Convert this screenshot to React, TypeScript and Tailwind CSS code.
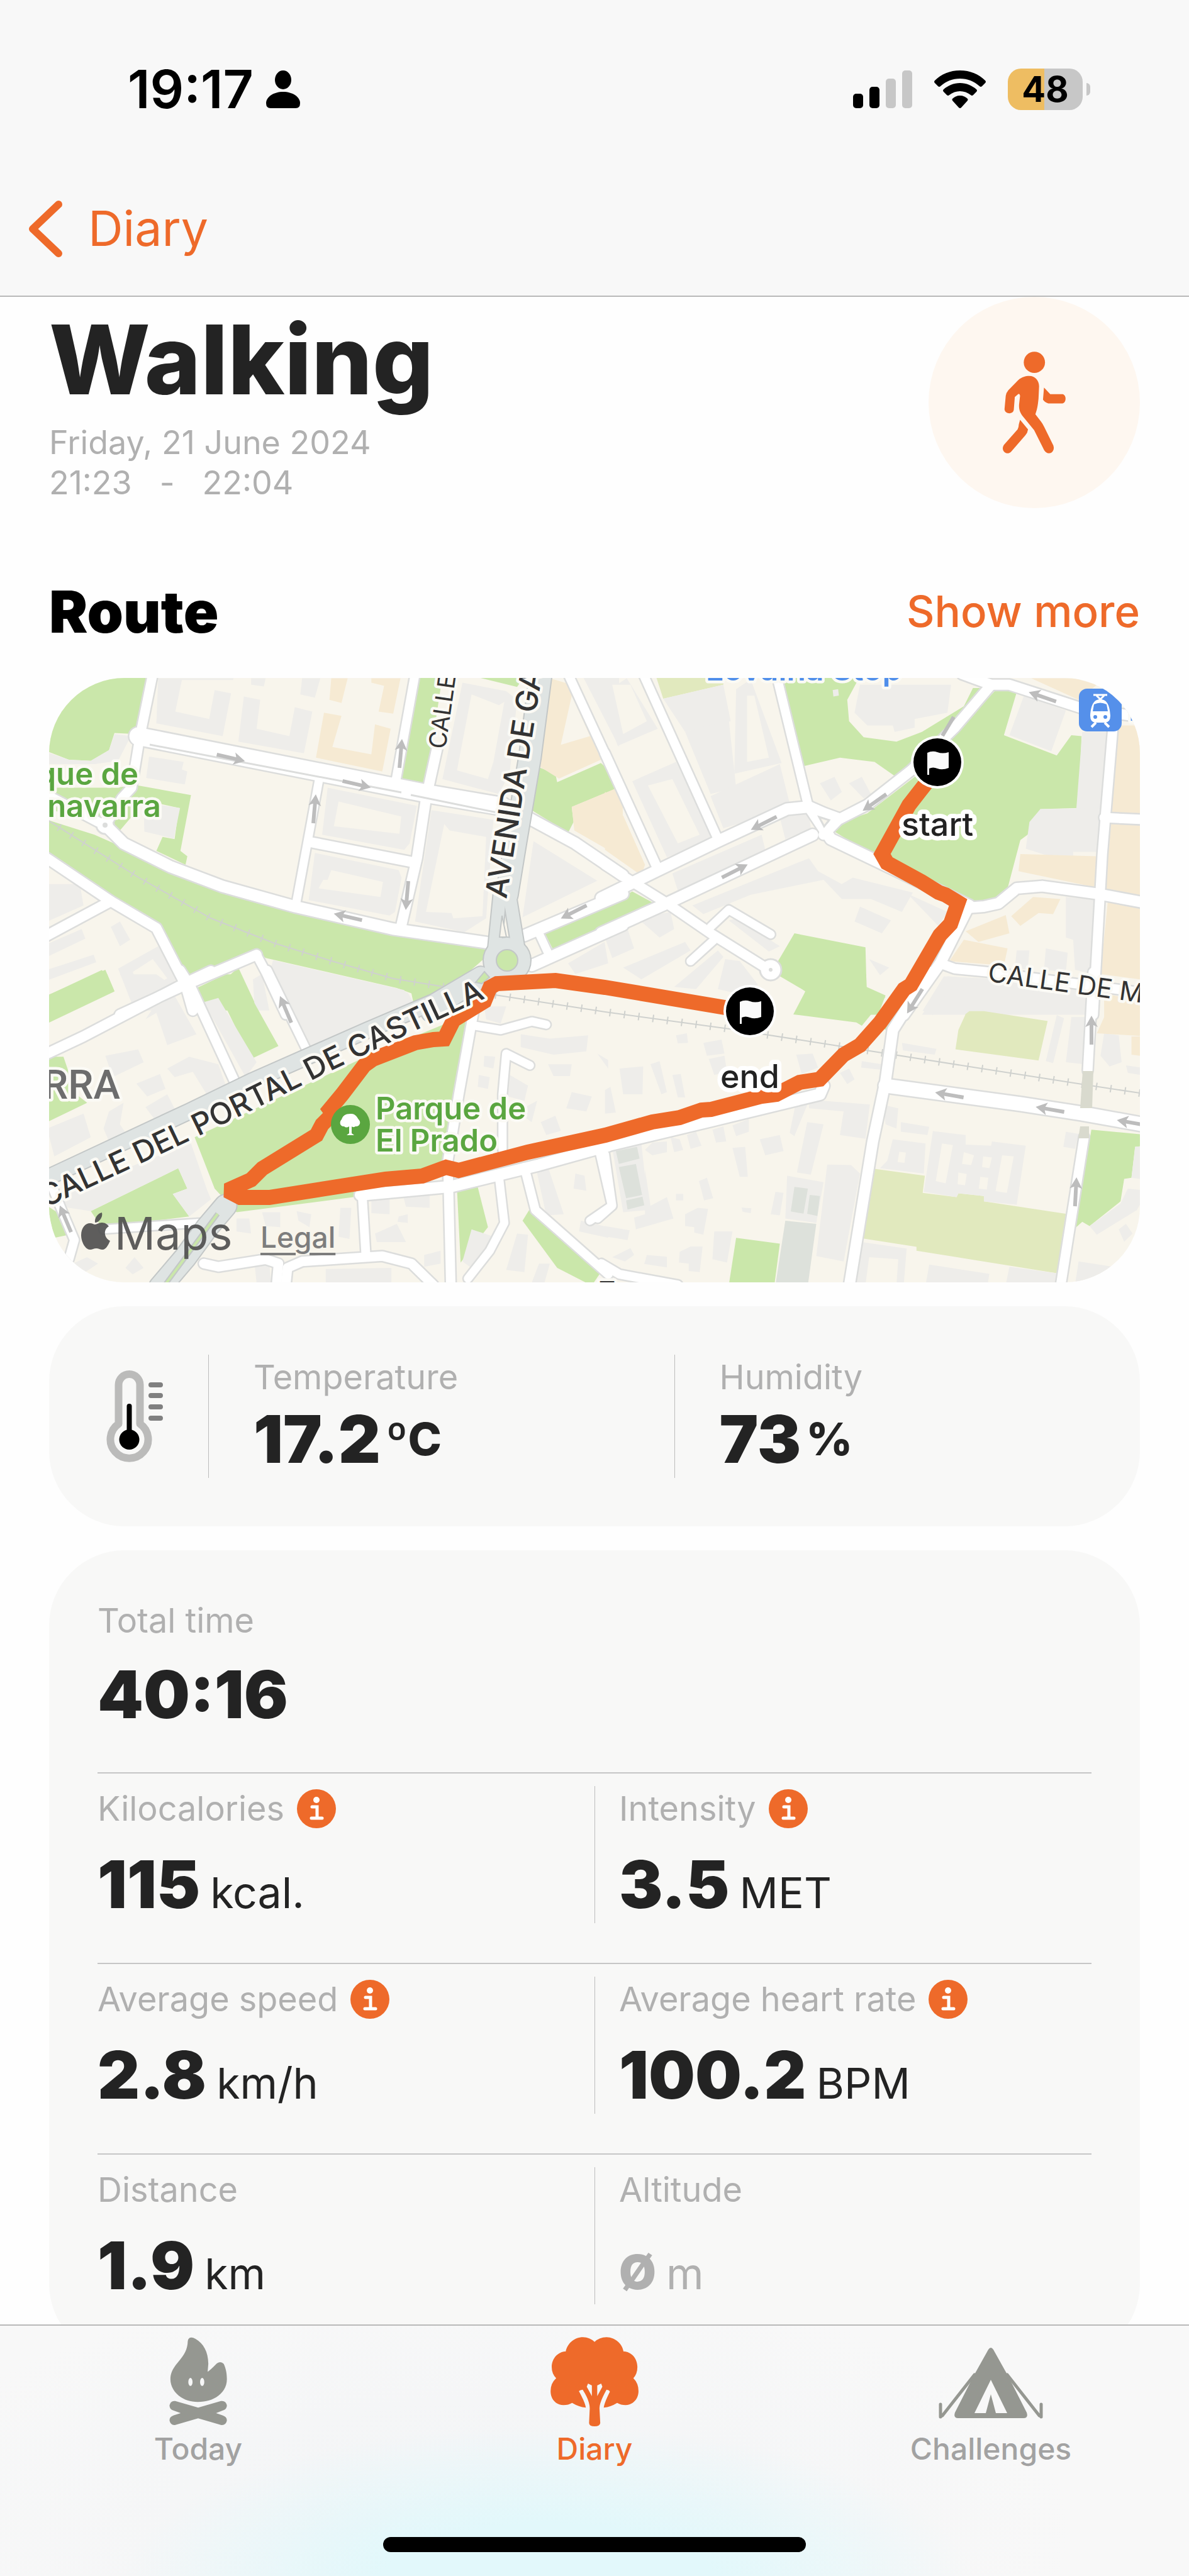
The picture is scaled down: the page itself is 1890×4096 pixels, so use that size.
import type { ReactNode } from "react";

type Road = [points: string, width: number];

type Tile = {
  matrix: string;
  parks: string[];
  fields: string[];
  buildings: string[];
  shops: string[];
  courts: string[];
  sheds: string[];
  roads: Road[];
  majors: Road[];
};

const tiles: Tile[] = [
  {
    matrix: "matrix(0.5792 0 0 0.3407 -3.2 -9.6)",
    parks: [
      "-5,20 280,20 245,290 185,285 170,365 120,415 60,410 0,370",
      "180,540 250,530 395,575 366,835 385,860 380,900 300,835 317,770 350,780 362,635 270,600 200,740 150,700 0,640 0,540",
      "0,690 130,760 210,820 330,920 480,1010 680,1110 950,1215 1210,1285 1205,1330 1090,1500 1010,1580 1000,1500 960,1475 600,1335 570,1300 390,1425 310,1190 180,1070 0,870",
      "1020,20 1085,20 1040,530 965,510",
      "1170,20 1310,20 1290,70",
      "1350,445 1395,475 1400,515 1520,425 1580,520 1568,540 1440,630 1445,700 1430,750 1330,645",
      "1365,1215 1580,1055 1580,1180 1390,1300",
      "0,1510 160,1390 185,1490 60,1580 0,1580",
      "425,1530 525,1380 580,1580 430,1580",
    ],
    fields: [],
    buildings: [
      "305,30 512,30 510,38 370,38 352,185 445,220 460,85 505,100 482,300 300,240",
      "540,115 585,130 575,265 665,300 680,165 728,185 705,380 525,325",
      "560,30 600,30 595,68 560,60",
      "700,30 750,30 735,120 695,105",
      "280,395 375,420 370,455 385,465 378,525 272,495",
      "185,290 230,300 195,415 130,430 0,430 0,375 60,410 120,415 170,365",
      "265,610 365,635 348,778 267,745",
      "770,540 1015,625 995,800 980,830 755,760",
      "735,845 965,925 973,960 955,1120 940,1137 718,1065",
      "1140,50 1260,90 1290,130 1270,470 1240,570 1085,500",
      "1055,645 1225,690 1205,1150 1145,1215 1010,1165",
      "1335,790 1510,975 1305,1145",
      "1470,20 1570,20 1570,350",
      "620,1345 980,1485 1010,1580 640,1580 605,1440",
      "565,1435 590,1410 610,1580 570,1580",
      "0,990 90,990 100,1090 0,1165",
      "175,1190 200,1165 228,1250 200,1280",
      "0,1270 95,1200 105,1245 0,1330",
      "0,1390 128,1320 135,1355 0,1440",
      "195,1385 305,1280 355,1430 300,1580 240,1580",
      "1430,1360 1530,1260 1540,1360 1450,1410",
    ],
    shops: [
      "780,30 825,30 808,145 775,130",
      "890,30 970,30 950,195 910,185 925,65 890,50",
      "760,190 808,205 783,350 890,385 900,245 943,265 920,465 738,400",
      "1380,30 1440,60 1520,410 1405,498 1350,440",
      "1580,530 1440,630 1447,740 1580,870",
    ],
    courts: [
      "800,605 972,675 967,755 787,720",
      "780,925 922,980 915,1050 745,1010 758,970 770,970",
      "1165,105 1240,155 1255,140 1225,420 1210,500 1125,460",
      "1090,710 1105,740 1205,770 1195,1140 1115,1150 1110,1125 1040,1120",
      "235,1400 290,1340 330,1430 260,1500",
      "1440,110 1490,300 1410,340",
    ],
    sheds: [],
    roads: [
      ["290,10 255,300 232,540 205,590 160,715", 15],
      ["160,715 210,800 340,910 480,1000 680,1095 950,1200 1225,1268", 18],
      ["0,575 140,700", 15],
      ["0,870 175,1070 300,1195 380,1460 400,1580", 16],
      ["0,1230 175,1070", 16],
      ["250,300 1050,570 1250,628", 28],
      ["1320,680 1450,800 1580,950", 18],
      ["1010,10 955,530", 14],
      ["1070,360 1040,590 1015,870 970,1200", 16],
      ["750,470 700,930 683,1085", 13],
      ["725,795 1010,890", 16],
      ["1430,10 1580,560", 14],
      ["1580,1035 1310,1230", 18],
      ["1580,1180 1330,1370", 18],
      ["1350,1220 1380,1330", 13],
      ["200,1600 380,1460 575,1320", 16],
      ["575,1320 600,1400 655,1600", 14],
    ],
    majors: [
      ["1355,10 1325,400 1285,800 1262,1040", 34],
      ["1245,1000 1228,1290", 20],
      ["1265,1000 1292,1280", 20],
      ["1225,1400 1130,1500 1050,1590", 26],
    ],
  },
  {
    matrix: "matrix(0.5792 0 0 0.3407 883.6 -9.6)",
    parks: [
      "485,20 700,20 665,130 670,230 710,305 800,325 870,280 985,160 1010,75 1055,75 840,450 795,485 740,420 690,410 645,400 545,440",
      "1075,80 1130,95 1095,295 1240,390 1280,295 1308,300 1300,635 1195,640 1160,760 1140,785 1105,1010 1085,1060 1040,1080 990,1070 740,860 630,745 650,700 720,660 850,490",
      "0,1095 75,1025 130,1075 0,1185",
      "520,1220 715,1285 718,1470 770,1510 750,1600 530,1600 550,1490 480,1420 475,1350",
      "0,480 15,540 0,560",
    ],
    fields: ["140,20 325,20 325,60 160,125"],
    buildings: [
      "160,125 325,60 345,230 220,280",
      "0,95 60,30 145,265 35,345 0,180",
      "360,80 400,35 485,425 355,475",
      "220,280 340,225 360,540 290,570",
      "290,580 480,430 510,635 325,730",
      "75,510 195,420 300,780 170,865",
      "700,60 950,60 940,190 850,220 850,260 795,280 790,250 720,250 685,190",
      "625,85 640,80 642,110 627,115",
      "1150,110 1265,180 1225,370 1110,295",
      "1310,280 1380,280 1360,720 1290,720",
      "1195,640 1360,635 1350,840 1285,840 1285,895 1155,825 1165,700",
      "185,940 430,760 440,830 200,1020",
      "480,680 560,660 565,730 495,780",
      "240,1090 530,890 560,870 585,930 650,990 680,960 845,1030 815,1120 730,1060 650,1060 600,970 400,1040 270,1130",
      "700,1095 785,1160 760,1220 685,1165",
      "590,520 630,490 650,560 620,600",
      "670,520 705,490 730,570 710,590",
      "340,1160 360,1150 480,1280 450,1305",
      "0,1240 60,1190 80,1290 20,1335",
      "90,1150 180,1120 190,1200 150,1240",
      "50,1380 220,1260 235,1300 100,1435",
      "190,1470 310,1300 325,1330 250,1480",
      "330,1340 370,1350 420,1460 360,1500 310,1480",
      "830,1035 940,1120 915,1185",
      "725,1340 780,1380 755,1415",
      "1265,1050 1350,1065 1340,1410 1290,1390 1285,1250 1265,1240",
      "1130,1300 1165,1300 1160,1390 1125,1380",
      "1210,1290 1270,1310 1265,1400 1205,1390",
      "940,1420 1330,1480 1320,1600 870,1600",
    ],
    shops: [
      "1410,250 1490,250 1490,660 1390,655",
      "1390,700 1490,710 1490,1050 1370,1010",
      "1140,850 1350,860 1345,1005 1135,930",
      "1170,30 1290,30 1350,60 1300,130",
      "1175,1050 1250,1060 1230,1130 1190,1125 1140,1185 1115,1140",
      "1100,1135 1110,1220 1025,1260 990,1210",
      "985,1250 1105,1290 1095,1370 945,1350",
      "1380,1070 1490,1110 1490,1440 1360,1410",
      "0,560 45,600 0,700",
      "0,720 50,670 110,900 100,950 0,830",
    ],
    courts: ["118,530 185,500 260,760 200,800", "20,60 70,60 115,230 50,290", "390,110 410,110 450,400 390,420"],
    sheds: [],
    roads: [
      ["105,10 310,780", 14],
      ["0,380 145,920", 15],
      ["470,10 560,640", 14],
      ["1060,60 960,260 840,460 720,620 640,690 600,760", 16],
      ["980,10 1060,60 1110,60 1310,170 1490,215", 16],
      ["-10,1055 140,930 310,790 500,640 560,630 600,660 640,685", 18],
      ["-10,1218 170,1080 570,760", 18],
      ["565,640 620,780 1000,1090", 18],
      ["1000,1100 1040,1095 1080,1080 1130,1010 1200,1000 1350,1035 1490,1080", 17],
      ["0,900 170,1080 290,1220 450,1390", 15],
      ["290,1190 340,1110 455,1225", 13],
      ["300,1250 235,1350", 13],
      ["1000,1090 920,1360 820,1600", 17],
      ["920,1360 960,1385 1050,1400 1490,1500", 15],
      ["1395,240 1365,850 1340,1600", 15],
      ["1370,680 1490,690", 15],
    ],
    majors: [],
  },
  {
    matrix: "matrix(0.5792 0 0 0.3407 -3.2 471.2)",
    parks: [
      "0,100 150,-20 165,0 185,80 0,230",
      "410,65 490,0 525,0 635,335 560,395 475,100 430,140",
      "405,760 880,380 1180,170 1110,640 1095,870 1030,930 860,1010 840,1040 520,1110 460,1000",
      "0,385 45,385 80,560 110,600 0,690",
      "120,1105 360,905 385,1000 345,1025 390,1130 150,1180",
      "0,1080 45,1130 75,1210 20,1230",
      "1125,1000 1180,980 1210,1180 1135,1345",
      "1325,1095 1520,1390 1500,1440 1480,1440 1400,1370 1305,1150",
    ],
    fields: [],
    buildings: [
      "635,0 770,0 990,85 1010,145 825,290 720,370",
      "200,0 300,0 350,60 250,130",
      "270,210 300,180 330,330 410,280 350,100 290,160",
      "430,130 470,110 575,410 545,480",
      "330,440 390,385 470,420 495,540 440,565 400,455 350,480",
      "160,380 250,350 265,410 180,480",
      "245,510 310,465 325,535 275,570",
      "270,620 330,560 360,660 310,710",
      "0,720 100,650 120,760 20,850",
      "170,640 210,600 200,700 235,790 180,820 155,720",
      "0,1060 270,870 395,790 440,1010 450,1050 390,1130 345,1025 385,1000 360,905 120,1105 60,1090",
      "1300,280 1380,300 1485,285 1480,360 1390,375 1300,340",
      "1200,150 1260,150 1245,230 1205,210",
      "1375,420 1440,420 1435,475 1390,475",
      "1510,370 1540,400 1540,440",
      "1200,380 1230,385 1225,440 1198,430",
      "1185,470 1215,480 1210,535 1182,525",
      "1270,470 1320,520 1310,590 1265,570",
      "1440,550 1495,570 1480,640 1425,625",
      "1355,690 1395,660 1410,730 1370,750",
      "1290,640 1345,590 1330,690",
      "975,1020 1050,1025 1050,1090 985,1085",
      "890,1060 940,1045 940,1120 890,1115",
      "965,1130 990,1120 990,1160 962,1155",
      "900,1210 960,1165 985,1250 905,1250",
      "805,1090 835,1090 830,1235 800,1225",
      "590,1110 640,1110 640,1180 600,1175",
      "520,1140 555,1140 560,1210 520,1200",
      "685,1105 725,1120 720,1180 690,1150",
      "765,1375 945,1370 945,1440 765,1440",
      "1340,890 1375,900 1418,1120 1370,1125",
      "1165,1190 1235,1230 1180,1390 1140,1340",
      "1465,1150 1540,1180 1540,1230 1460,1200",
      "1290,1210 1320,1215 1310,1390 1260,1380",
      "1350,1350 1380,1350 1365,1440 1330,1440",
      "1450,930 1475,940 1480,1010 1445,1000",
      "570,1360 610,1350 615,1440 575,1440",
      "1035,1310 1080,1290 1080,1350 1035,1365",
      "70,1350 110,1320 140,1350 100,1395",
      "215,1370 240,1320 265,1370 235,1400",
    ],
    shops: [],
    courts: [],
    sheds: [],
    roads: [
      ["0,370 100,290 375,45 450,-15", 16],
      ["365,-20 395,60 520,520", 15],
      ["605,-20 720,380", 13],
      ["1170,180 1130,560 1100,870 1108,1450", 15],
      ["1175,240 1245,260 1330,220 1370,235", 13],
      ["1250,820 1250,560 1260,370 1325,425", 13],
      ["860,1030 1110,990 1350,890 1540,800", 18],
      ["865,1030 875,1310", 14],
      ["430,1350 470,1365 600,1330 635,1350 630,1450", 15],
      ["655,1450 660,1370 700,1340 920,1315 1000,1350 1060,1450", 15],
      ["1310,900 1340,1100 1540,1400", 14],
      ["1240,940 1255,1160 1215,1290 1155,1420", 13],
      ["1515,820 1550,1080 1490,1150", 13],
      ["0,930 40,1100 75,1240 60,1330", 14],
      ["155,1190 420,1160", 13],
    ],
    majors: [
      ["1190,0 1060,130 880,260 560,500 390,640 0,950", 24],
      ["490,1080 440,1180 380,1320 310,1460", 34],
    ],
  },
  {
    matrix: "matrix(0.5792 0 0 0.3407 883.6 471.2)",
    parks: [
      "1335,725 1490,750 1490,800 1455,805 1445,950 1425,955 1415,1060 1330,1175 1310,1155 1290,1185",
      "360,1230 480,1257 465,1450 340,1450",
      "485,0 717,0 718,65 770,105 705,240 690,225 517,187 550,80",
      "850,60 775,262 745,240",
    ],
    fields: [
      "1000,172 1040,172 1215,218 1190,402 962,350 970,260 990,185",
      "737,907 878,940 872,1020 965,1040 970,1022 1040,1035 1040,1060 1265,1118 1240,1395 855,1290 855,1272 705,1232",
    ],
    buildings: [
      "930,10 1060,20 1310,60 1300,180 1205,180 1060,170 1000,160 995,75 945,70 900,190 872,170",
      "1240,190 1260,205 1230,415 1210,405",
      "1280,200 1325,200 1315,420 1265,410",
      "1370,275 1410,285 1418,410 1385,430 1360,380",
      "815,320 910,348 905,375 818,355",
      "560,585 727,608 715,768 645,750 655,640 560,625",
      "525,590 560,590 520,755 507,740",
      "555,690 600,700 565,935 527,925",
      "610,888 675,890 700,930 655,1340 580,1315",
      "500,940 600,970 580,1160 495,1140",
      "765,610 805,625 800,720 770,700",
      "812,690 890,712 885,750 812,735",
      "790,770 880,790 875,930 755,905 775,870",
      "900,732 990,750 990,795 1060,800 1062,780 1155,800 1130,1075 1040,1060 1040,1035 970,1022 965,1040 875,1015",
      "350,705 395,675 395,735 360,755",
      "425,770 480,750 490,825 440,845",
      "295,725 325,710 333,780 305,785",
      "225,750 250,735 265,800 235,815",
      "180,760 205,770 215,820 190,830",
      "110,820 130,785 170,780 170,830 130,845",
      "350,810 385,805 392,945 370,945",
      "258,965 280,950 297,1045 272,1055",
      "20,810 100,790 120,1100 50,1110",
      "110,910 125,1080 170,1040 188,1140 85,1190 80,1135 110,1120",
      "220,1120 255,1090 283,1095 270,1215 245,1205 245,1180 220,1175",
      "300,1200 350,1200 335,1345 295,1330",
      "205,1295 235,1270 268,1270 260,1390 230,1385 230,1350 203,1345",
      "20,1320 70,1278 80,1310 55,1340",
      "115,1310 170,1318 170,1368 108,1352",
      "0,1175 68,1195 62,1240 5,1225",
      "468,1015 490,1020 480,1125 455,1120",
      "195,1025 215,1025 215,1055 195,1055",
      "375,1088 402,1092 400,1115 378,1108",
      "195,285 225,275 228,320 200,322",
      "270,320 320,305 328,370 280,380",
      "285,395 328,380 335,455 300,470",
      "525,375 570,370 585,435 540,465",
      "645,460 670,440 685,490 665,512",
      "40,440 105,430 103,560 50,560",
      "125,420 150,405 170,550 155,560",
      "185,470 208,465 220,575 200,575",
      "0,540 15,525 30,645 0,650",
      "705,405 760,420 755,445 703,435",
      "705,1250 828,1280 820,1450 800,1450 805,1330 725,1320 715,1450 690,1450 700,1300",
      "890,1355 1055,1398 1050,1450 880,1450",
      "1110,1365 1240,1395 1240,1450 1100,1450",
      "1300,1340 1395,1365 1380,1450 1290,1450",
      "1435,1000 1490,1010 1460,1100 1350,1215 1330,1175 1415,1070",
      "1410,1190 1430,1165 1448,1210 1425,1248",
      "1455,805 1490,800 1490,960 1445,950",
      "1430,425 1490,440 1490,475 1435,460",
      "1265,735 1300,745 1290,815 1258,805",
    ],
    shops: ["1370,90 1490,130 1490,290 1350,275 1370,200", "1445,290 1490,290 1490,385 1445,375"],
    courts: [
      "925,790 955,797 935,975 908,965",
      "1090,845 1122,850 1103,1020 1072,1012",
      "985,830 1013,845 1005,890 980,885",
      "1038,850 1062,855 1055,905 1035,900",
      "970,925 993,932 988,985 968,980",
      "1030,945 1052,950 1048,1005 1026,1000",
      "808,828 826,832 822,880 803,876",
    ],
    sheds: [
      "30,825 88,805 95,860 38,885",
      "38,900 85,885 102,1030 58,1045",
      "58,1055 103,1038 108,1078 62,1098",
      "520,992 557,1000 545,1117 510,1107",
      "562,1030 590,1035 583,1128 555,1118",
      "495,1150 580,1165 557,1450 468,1450",
    ],
    roads: [
      ["890,-10 790,260 770,500 735,780 670,1460", 17],
      ["770,520 1140,605 1310,650 1490,705", 22],
      ["1340,-10 1325,450", 15],
      ["1315,760 1250,1460", 15],
      ["-15,808 300,680 590,560 600,520", 18],
      ["0,840 20,1080 -20,1140", 13],
      ["-10,1350 40,1400 200,1450", 14],
    ],
    majors: [],
  },
];

// x, y and heading of every one-way arrow
const arrows: [number, number, number][] = [
  [289, 127, 13],
  [489, 169, 13],
  [559, 120, -85],
  [422, 208, -85],
  [569, 346, 95],
  [475, 380, 193],
  [834, 372, 153],
  [376, 527, -113],
  [26, 860, -113],
  [1579, 30, 199],
  [1312, 198, 145],
  [1136, 231, 153],
  [1090, 307, -27],
  [1376, 514, 122],
  [1657, 560, -90],
  [1431, 663, 190],
  [1591, 686, 190],
  [1720, 707, 190],
  [1632, 817, -87],
];

const routePoints =
  "1411,140 1399,161 1367,202 1324,280 1332,294 1387,324 1414,341 1425,345 1445,357 1433,391 1416,409 1370,488 1359,495 1321,548 1289,584 1263,599 1225,638 1193,643 1156,662 1133,665 1052,686 1037,687 1002,699 959,706 884,727 761,754 651,783 631,778 593,792 535,797 350,826 304,826 283,815 321,798 339,780 425,727 434,710 451,693 446,686 466,662 501,616 515,606 582,580 611,575 628,574 643,544 692,514 701,492 712,486 805,481 884,492 1086,526";

const railways = [
  "-4,225 142,317 257,382 356,421 449,450 547,478 628,491",
  "709,504 884,531 1081,558 1254,585 1463,618 1642,646 1740,661",
];

const Polygons = ({ list, fill }: { list: string[]; fill: string }) => (
  <>
    {list.map((points) => (
      <polygon key={points} points={points} fill={fill} />
    ))}
  </>
);

const Roads = ({ list, color, extra = 0 }: { list: Road[]; color: string; extra?: number }) => (
  <>
    {list.map(([points, width]) => (
      <polyline
        key={points}
        points={points}
        fill="none"
        stroke={color}
        strokeWidth={width + extra}
        strokeLinecap="round"
        strokeLinejoin="round"
        vectorEffect="non-scaling-stroke"
      />
    ))}
  </>
);

const Marker = ({ x, y }: { x: number; y: number }) => (
  <g transform={`translate(${x} ${y})`}>
    <circle r="42" fill="#fff" />
    <circle r="38" fill="#000" />
    <path
      d="M-16 -15 Q-8 -19 0 -16 Q8 -13 18 -16 V9 Q8 13 0 10 Q-7 7 -13 10 V20 H-16 Z"
      fill="#fafafa"
    />
  </g>
);

const RouteMap = () => (
  <svg
    viewBox="0 0 1734 961"
    preserveAspectRatio="xMidYMid slice"
    className="block h-full w-full font-['Inter',sans-serif]"
    role="img"
    aria-label="Walking route"
  >
    <rect width="1734" height="961" fill="#f8f5ec" />
    {tiles.map((tile) => (
      <g key={tile.matrix} transform={tile.matrix}>
        <Polygons list={tile.parks} fill="#cae7aa" />
        <Polygons list={tile.fields} fill="#e1e9be" />
        <Polygons list={tile.buildings} fill="#eeedea" />
        <Polygons list={tile.shops} fill="#f6ead3" />
        <Polygons list={tile.courts} fill="#f8f5ec" />
        <Polygons list={tile.sheds} fill="#dde1db" />
      </g>
    ))}

    {railways.map((points) => (
      <g key={points} fill="none" stroke="#cfd1ce">
        <polyline points={points} strokeWidth="2" />
        <polyline points={points} strokeWidth="12" strokeDasharray="2 21" />
      </g>
    ))}

    {tiles.map((tile) => (
      <g key={tile.matrix} transform={tile.matrix}>
        <Roads list={tile.roads} color="#dcdddc" extra={5} />
      </g>
    ))}
    <circle cx="89" cy="234" r="14" fill="#fff" stroke="#dcdddc" strokeWidth="3" />
    <circle cx="1147" cy="464" r="17" fill="#fff" stroke="#dcdddc" strokeWidth="3" />
    {tiles.map((tile) => (
      <g key={tile.matrix} transform={tile.matrix}>
        <Roads list={tile.roads} color="#ffffff" />
      </g>
    ))}
    <path d="M160 106 L560 182 M575 186 L712 214" stroke="#dcdddc" strokeWidth="3" />
    <path d="M1643 625 H1660 L1658 684 H1639 Z M1639 713 H1653 L1653 732 H1636 Z" fill="#d9dace" />
    <path d="M1224 221 L1240 226 L1232 236 Z" fill="#f8f5ec" stroke="#dcdddc" strokeWidth="3" />
    <circle cx="89" cy="234" r="4" fill="#dcdddc" />
    <circle cx="1147" cy="464" r="3" fill="#dcdddc" />

    {tiles.map((tile) => (
      <g key={tile.matrix} transform={tile.matrix}>
        <Roads list={tile.majors} color="#c3c7c7" extra={4} />
      </g>
    ))}
    <ellipse cx="728" cy="449" rx="27" ry="26" fill="none" stroke="#c3c7c7" strokeWidth="24" />
    {tiles.map((tile) => (
      <g key={tile.matrix} transform={tile.matrix}>
        <Roads list={tile.majors} color="#dfe4e3" />
      </g>
    ))}
    <ellipse cx="728" cy="449" rx="27" ry="26" fill="#cae7aa" stroke="#dfe4e3" strokeWidth="20" />
    <circle cx="728" cy="449" r="17" fill="#cae7aa" stroke="#c3c7c7" strokeWidth="2" />
    <path d="M720 378 L716 412 L727 412 Z" fill="#f8f5ec" stroke="#c3c7c7" strokeWidth="2" />
    <path d="M692 467 L700 476 L688 486 L678 484 Z" fill="#cae7aa" stroke="#c3c7c7" strokeWidth="2" />
    <path d="M268 852 L182 968" stroke="#c3c7c7" strokeWidth="8" />
    <path d="M268 852 L182 968" stroke="#cae7aa" strokeWidth="4" />

    {arrows.map(([x, y, angle]) => (
      <path
        key={`${x}-${y}`}
        transform={`translate(${x} ${y}) rotate(${angle})`}
        d="M-23 -3 H8 L5 -10 L23 0 L5 10 L8 3 H-23 Z"
        fill="#bdbdbd"
      />
    ))}
    <path d="M1420 92 L1438 62" stroke="#bdbdbd" strokeWidth="6" />

    <polyline
      points={routePoints}
      fill="none"
      stroke="#ee6a2a"
      strokeWidth="24"
      strokeLinejoin="miter"
      strokeMiterlimit="2"
    />

    <g
      stroke="#fbfaf5"
      strokeWidth="9"
      strokeLinejoin="round"
      paintOrder="stroke"
      fill="#333333"
      fontWeight="500"
    >
      <path id="castilla" d="M-130 900 Q60 812 140 775 Q300 700 431 633 Q560 570 694 509" fill="none" stroke="none" />
      <text fontSize="48">
        <textPath href="#castilla" startOffset="100%" textAnchor="end">
          CALLE DEL PORTAL DE CASTILLA
        </textPath>
      </text>
      <text fontSize="48" transform="translate(727 352) rotate(-81)">
        AVENIDA DE GA
      </text>
      <text fontSize="38" fontWeight="400" transform="translate(630 114) rotate(-82)">
        CALLE
      </text>
      <text fontSize="42" fontWeight="400" transform="translate(1491 482) rotate(8)">
        CALLE DE M
      </text>
      <text fontSize="40" x="874" y="988">
        Tr
      </text>
      <text fontSize="64" x="113" y="669" textAnchor="end" fill="#6d6d6d" className="font-['Roboto',sans-serif]">
        ARRA
      </text>
      <g fontSize="49" fontWeight="600" fill="#5aa640">
        <text textAnchor="end">
          <tspan x="142" y="170">
            que de
          </tspan>
          <tspan x="178" y="221">
            navarra
          </tspan>
        </text>
        <text>
          <tspan x="519" y="702">
            Parque de
          </tspan>
          <tspan x="519" y="753">
            El Prado
          </tspan>
        </text>
      </g>
      <g fontSize="50" fontWeight="600" fill="#4f8eea">
        <text x="1044" y="4">
          Lovaina Stop
        </text>
        <text x="1716" y="68">
          L
        </text>
      </g>
      <g fontSize="52" fill="#222222" textAnchor="middle" strokeWidth="14" stroke="#ffffff">
        <text x="1412" y="251">
          start
        </text>
        <text x="1114" y="652">
          end
        </text>
      </g>
    </g>

    <circle cx="479" cy="710" r="31" fill="#5aa640" />
    <path
      d="M479 693 C487 692 490 699 492 702 C497 707 493 714 487 713 C484 715 482 714 481 713 L481 724 L485 727 H473 L477 724 V713 C473 716 470 714 469 713 C462 713 461 706 465 702 C467 696 471 693 479 693 Z"
      fill="#fff"
    />

    <rect x="1637" y="17" width="68" height="68" rx="13" fill="#5590ea" />
    <g fill="none" stroke="#fff" strokeWidth="3">
      <path d="M1660 27 H1682 M1665 28 L1671 34 L1677 28" />
      <path d="M1664 71 L1657 78 M1678 71 L1685 78" strokeWidth="4" />
    </g>
    <path
      d="M1671 34 C1682 34 1686 44 1687 60 Q1687 71 1678 71 H1664 Q1655 71 1655 60 C1656 44 1660 34 1671 34 Z M1661 42 L1659 53 H1683 L1681 42 Q1671 37 1661 42 Z"
      fill="#fff"
      fillRule="evenodd"
    />
    <circle cx="1663" cy="62" r="3" fill="#5590ea" />
    <circle cx="1679" cy="62" r="3" fill="#5590ea" />

    <Marker x={1412} y={134} />
    <Marker x={1114} y={530} />

    <g fill="#4d4d4d" opacity="0.9">
      <path d="M84 850 C86 858 79 866 73 866 C72 858 78 851 84 850 Z M73 869 C76 869 79 866 84 866 C89 866 93 869 95 872 C86 877 87 890 97 895 C94 902 90 909 85 909 C81 909 79 907 75 907 C71 907 69 909 65 909 C58 909 51 897 51 886 C51 874 58 867 65 867 C69 867 71 869 73 869 Z" />
      <text x="104" y="909" fontSize="72">
        Maps
      </text>
    </g>
  </svg>
);

const PersonIcon = () => (
  <svg viewBox="0 0 54 60" className="h-[60px] w-[54px]" aria-hidden="true">
    <ellipse cx="27" cy="15" rx="13" ry="15" />
    <path d="M0 52 C0 42 12 34 27 34 C42 34 54 42 54 52 Q54 60 47 60 H7 Q0 60 0 52 Z" />
  </svg>
);

const SignalIcon = () => (
  <svg viewBox="0 0 94 60" className="h-[60px] w-[94px]" aria-hidden="true">
    <rect x="0" y="37" width="16" height="23" rx="5" />
    <rect x="26" y="26" width="16" height="34" rx="5" />
    <rect x="52" y="13" width="16" height="47" rx="5" fill="#c7c7c7" />
    <rect x="78" y="0" width="16" height="60" rx="5" fill="#c7c7c7" />
  </svg>
);

const WifiIcon = () => (
  <svg viewBox="0 0 82 60" className="h-[60px] w-[82px]" aria-hidden="true">
    <path d="M41 0 C57 0 71 6 81 16 Q83 18 81 20 L76 25 Q74 27 72 25 C63 17 53 13 41 13 C29 13 19 17 10 25 Q8 27 6 25 L1 20 Q-1 18 1 16 C11 6 25 0 41 0 Z" />
    <path d="M41 20 C51 20 60 24 67 30 Q69 32 67 34 L62 39 Q60 41 58 39 C53 35 47 33 41 33 C35 33 29 35 24 39 Q22 41 20 39 L15 34 Q13 32 15 30 C22 24 31 20 41 20 Z" />
    <path d="M41 40 C46 40 50 42 53 45 Q54 46 53 48 L43 59 Q41 61 39 59 L29 48 Q28 46 29 45 C32 42 36 40 41 40 Z" />
  </svg>
);

const WalkingIcon = () => (
  <svg viewBox="0 0 990 1080" className="h-[192px] w-[176px]" fill="#ee6a2a" aria-hidden="true">
    <circle cx="485" cy="181" r="95" />
    <path d="M340 340 C375 312 405 303 440 303 C490 303 527 345 527 395 L522 505 C515 575 508 605 494 645 L545 712 Q560 732 572 757 L655 925 Q668 965 635 990 Q598 1005 573 968 L483 787 L375 655 C350 620 347 590 348 560 L357 480 Q352 455 338 467 L310 491 L301 605 C295 650 222 645 218 600 L229 480 Q231 455 252 430 Z" />
    <path d="M571 407 L627 466 H737 C773 472 773 542 737 548 H610 Q580 540 562 515 Z" />
    <path d="M357 695 L428 780 Q425 810 405 833 L277 980 C235 1020 180 970 212 920 L335 780 Q345 760 346 735 Z" />
  </svg>
);

const ThermometerIcon = () => (
  <svg viewBox="0 0 96 152" className="h-[152px] w-24" aria-hidden="true">
    <path
      d="M21.5 26 a17 17 0 0 1 34 0 V88 a30 30 0 1 1 -34 0 Z"
      fill="none"
      stroke="#bbbbba"
      strokeWidth="12"
      strokeLinejoin="round"
    />
    <path d="M38.5 60 V112" stroke="#000" strokeWidth="8" strokeLinecap="round" />
    <circle cx="38.5" cy="113" r="16" />
    <path
      d="M73 26 H88 M73 43 H88 M73 61 H88 M73 79 H88"
      stroke="#808080"
      strokeWidth="8"
      strokeLinecap="round"
    />
  </svg>
);

const FireIcon = () => (
  <svg viewBox="0 40 684 810" className="h-36" fill="#959791" fillRule="evenodd" aria-hidden="true">
    <path d="M265 60 Q285 48 320 68 C390 110 432 180 434 290 L428 362 Q450 350 510 288 Q545 262 572 292 C595 340 600 390 600 430 C600 540 500 632 340 632 C190 632 95 530 95 430 C95 380 110 340 160 280 C220 210 248 160 250 90 Q252 70 265 60 Z M255 453 a19 36 0 1 0 38 0 a19 36 0 1 0 -38 0 Z M360 453 a19 36 0 1 0 38 0 a19 36 0 1 0 -38 0 Z" />
    <path d="M138 624 L343 683 L547 624 Q590 618 600 660 Q602 698 560 710 L503 732 L560 752 Q602 765 600 800 Q590 845 545 838 L343 779 L140 838 Q98 845 87 800 Q84 765 125 752 L187 732 L125 710 Q84 698 87 660 Q98 618 138 624 Z" />
  </svg>
);

const TreeIcon = () => (
  <svg viewBox="0 40 946 810" className="h-36" fill="#ee6a2a" fillRule="evenodd" aria-hidden="true">
    <path d="M215 180 C230 110 290 52 370 52 Q430 52 473 95 Q515 52 580 52 C660 55 720 110 732 180 C800 180 856 240 856 320 Q856 380 820 420 Q866 465 866 535 C866 610 810 660 750 660 Q710 660 675 640 Q620 675 555 683 Q560 640 610 540 Q605 525 580 522 Q515 640 517 690 L524 820 Q520 850 473 850 Q425 850 424 820 L430 690 Q430 620 367 522 Q345 525 333 535 Q390 640 395 683 Q330 675 272 640 Q240 660 195 660 C130 660 80 610 80 535 Q80 465 130 420 Q90 380 90 320 C90 240 150 180 215 180 Z M415 468 L449 485 V580 L403 495 Z M532 468 L543 495 L497 580 V485 Z" />
  </svg>
);

const TentIcon = () => (
  <svg viewBox="0 0 168 144" className="h-36" fill="#959791" fillRule="evenodd" aria-hidden="true">
    <path d="M80 22 Q84 16 88 22 L112 65 L141 122 Q144 131 136 131 H32 Q24 131 27 122 L56 65 Z M84 70 L58 123 H76 L84 93 L92 123 H110 Z" />
    <path
      d="M58 62 L7 127 M110 62 L161 127 M4 109 V129 M164 109 V129"
      fill="none"
      stroke="#959791"
      strokeWidth="5"
      strokeLinecap="round"
    />
  </svg>
);

const InfoButton = ({ label }: { label: string }) => (
  <button type="button" aria-label={`About ${label}`} className="size-[62px] rounded-full bg-[#ee6a2a]">
    <svg viewBox="0 0 62 62" className="size-full" aria-hidden="true">
      <circle cx="31" cy="17" r="5" fill="#fff" />
      <path d="M24 28 H32 V46 M23 46 H40" fill="none" stroke="#fff" strokeWidth="5" strokeLinecap="round" />
    </svg>
  </button>
);

type Stat = {
  label: string;
  value: string;
  unit: string;
  info?: boolean;
  empty?: boolean;
};

const statRows: Stat[][] = [
  [
    { label: "Kilocalories", value: "115", unit: "kcal.", info: true },
    { label: "Intensity", value: "3.5", unit: "MET", info: true },
  ],
  [
    { label: "Average speed", value: "2.8", unit: "km/h", info: true },
    { label: "Average heart rate", value: "100.2", unit: "BPM", info: true },
  ],
  [
    { label: "Distance", value: "1.9", unit: "km" },
    { label: "Altitude", value: "Ø", unit: "m", empty: true },
  ],
];

const StatCell = ({ label, value, unit, info, empty }: Stat) => (
  <div className="h-[218px] border-[#bcbcbc] even:border-l even:pl-[38px]">
    <div className="flex h-[72px] items-center gap-5 text-[54px] leading-[72px] text-[#b0b0b0]">
      <span>{label}</span>
      {info ? <InfoButton label={label} /> : null}
    </div>
    <p
      className={[
        "mt-6 text-[104px] leading-[120px]",
        empty ? "text-[#b0b0b0]" : "text-[#232323]",
      ].join(" ")}
    >
      <span className={empty ? "text-[76px] leading-none font-black" : "font-black"}>{value}</span>
      <span className="ml-4 text-[68px] leading-none">{unit}</span>
    </p>
  </div>
);

const WeatherCell = ({ label, value, unit }: { label: string; value: string; unit: string }) => (
  <div className="h-[196px] flex-1 border-l border-[#bcbcbc] pl-[71px]">
    <p className="text-[54px] leading-[72px] text-[#b0b0b0]">{label}</p>
    <p className="flex items-center gap-2 leading-[124px] text-[#232323]">
      <span className="text-[104px] font-black">{value}</span>
      <span className="text-[72px] font-extrabold">{unit}</span>
    </p>
  </div>
);

const Tab = ({ label, icon, active }: { label: string; icon: ReactNode; active?: boolean }) => (
  <a
    href="#"
    aria-current={active ? "page" : undefined}
    className={[
      "flex flex-col items-center gap-2 text-[48px] leading-[56px] font-medium",
      active ? "text-[#ee6a2a]" : "text-[#a2a2a2]",
    ].join(" ")}
  >
    {icon}
    <span>{label}</span>
  </a>
);

export default function App() {
  return (
    <div className="flex h-screen flex-col overflow-hidden bg-[#fefefe] font-['Inter',sans-serif]">
      <header className="shrink-0 border-b-2 border-[#b9b9b9] bg-[#f8f8f8] pb-[26px]">
        <div className="flex h-[284px] items-center justify-between pr-[157px] pl-[203px]">
          <div className="flex items-center gap-5">
            <span className="text-[84px] font-semibold">19:17</span>
            <PersonIcon />
          </div>
          <div className="flex items-center gap-[35px]">
            <SignalIcon />
            <WifiIcon />
            <div className="flex items-center gap-[6px]">
              <div className="flex h-[66px] w-[119px] items-center justify-center rounded-[21px] bg-linear-to-r from-[#eebd62] from-49% to-[#c7c7c7] to-49% text-[56px] leading-none font-bold">
                48
              </div>
              <div className="h-5 w-[6px] rounded-r-full bg-[#c7c7c7]" />
            </div>
          </div>
        </div>
        <nav className="flex h-40 items-center pl-[44px]">
          <a href="#" className="flex items-center gap-10 text-[77px] text-[#ee6a2a]">
            <svg viewBox="0 0 56 92" className="h-[92px] w-14" aria-hidden="true">
              <path
                d="M49 7 L8 46 L49 85"
                fill="none"
                stroke="#ee6a2a"
                strokeWidth="12"
                strokeLinecap="round"
                strokeLinejoin="round"
              />
            </svg>
            Diary
          </a>
        </nav>
      </header>

      <main className="min-h-0 flex-1 overflow-hidden px-[78px]">
        <div className="flex items-start justify-between">
          <div>
            <h1 className="text-[152px] leading-[200px] font-extrabold text-[#232323]">Walking</h1>
            <p className="text-[52px] leading-[64px] text-[#b0b0b0]">
              Friday, 21 June 2024
              <br />
              <span className="flex gap-11">
                <span>21:23</span>
                <span>-</span>
                <span>22:04</span>
              </span>
            </p>
          </div>
          <div className="flex size-[336px] items-center justify-center rounded-full bg-[#fef7f0] pl-1">
            <WalkingIcon />
          </div>
        </div>

        <div className="mt-[115px] flex h-[100px] items-center justify-between">
          <h2 className="text-[92px] leading-[100px] font-black">Route</h2>
          <a href="#" className="text-[69px] font-medium text-[#ee6a2a]">
            Show more
          </a>
        </div>

        <section className="relative mt-[55px] aspect-[1734/961] overflow-hidden rounded-[120px]">
          <RouteMap />
          <a
            href="#"
            className="absolute bottom-[44px] left-[336px] text-[46px] leading-[56px] font-medium text-[#7d7d7d] underline decoration-4 underline-offset-8"
          >
            Legal
          </a>
        </section>

        <section className="mt-[38px] flex h-[350px] items-center rounded-[120px] bg-[#f8f8f7]">
          <div className="flex w-[253px] justify-center pl-5">
            <ThermometerIcon />
          </div>
          <WeatherCell label="Temperature" value="17.2" unit="ºC" />
          <WeatherCell label="Humidity" value="73" unit="%" />
        </section>

        <section className="mt-[38px] rounded-[120px] bg-[#f8f8f7] px-[77px] pt-[76px] pb-6">
          <p className="text-[54px] leading-[72px] text-[#b0b0b0]">Total time</p>
          <p className="mt-[21px] mb-[64px] text-[104px] leading-[120px] font-black text-[#232323]">40:16</p>
          {statRows.map((row) => (
            <div key={row[0].label} className="grid grid-cols-2 border-t-2 border-[#c6c6c6] pt-5 pb-[63px]">
              {row.map((stat) => (
                <StatCell key={stat.label} {...stat} />
              ))}
            </div>
          ))}
        </section>
      </main>

      <footer className="flex h-[400px] shrink-0 flex-col items-center justify-between border-t-2 border-[#b9b9b9] bg-[#f8f8f8] bg-[radial-gradient(ellipse_36%_65%_at_46%_105%,#e2f8fb_40%,#e2f8fb00_100%),radial-gradient(ellipse_50%_100%_at_40%_80%,#f2f4f6,#f2f4f600)] pt-4 pb-[38px]">
        <nav className="grid w-full grid-cols-3">
          <Tab label="Today" icon={<FireIcon />} />
          <Tab label="Diary" icon={<TreeIcon />} active />
          <Tab label="Challenges" icon={<TentIcon />} />
        </nav>
        <div className="h-6 w-[672px] rounded-full bg-black" />
      </footer>
    </div>
  );
}
